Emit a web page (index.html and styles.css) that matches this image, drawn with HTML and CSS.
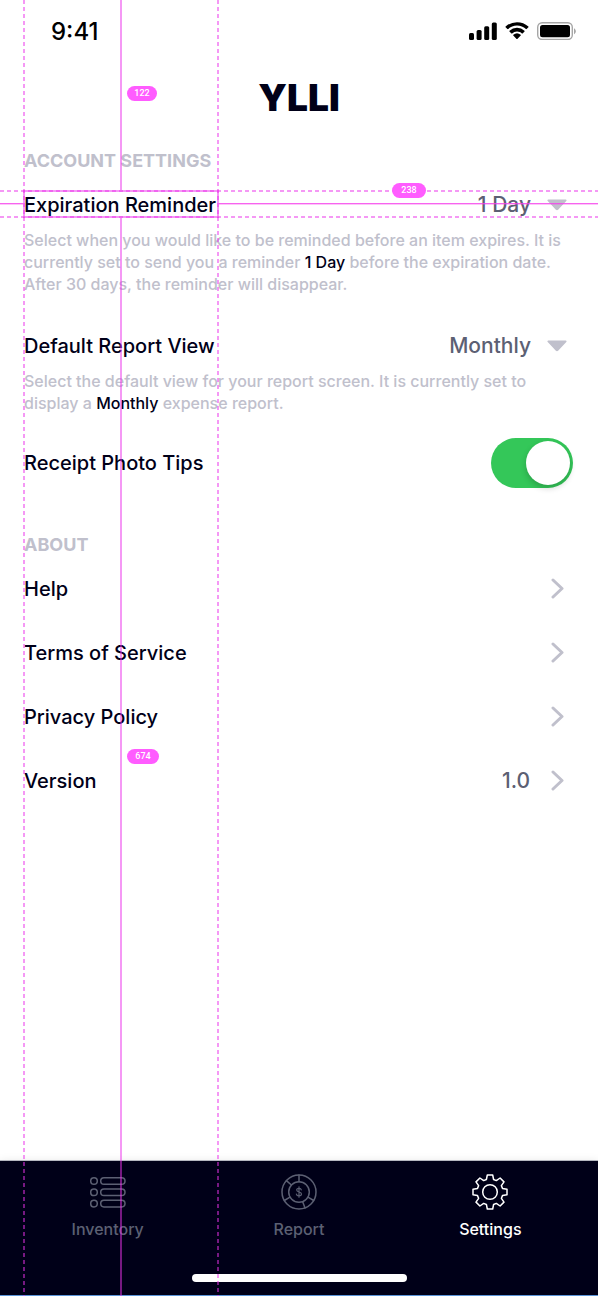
FILE: index.html
```html
<!DOCTYPE html>
<html lang="en">
<head>
<meta charset="utf-8">
<meta name="viewport" content="width=device-width, initial-scale=1">
<title>YLLI Settings</title>
<link rel="stylesheet" href="styles.css">
</head>
<body>
<div class="screen">
  <div class="status-bar">
    <span class="time">9:41</span>
    <div class="status-icons">
      <svg width="28" height="18" viewBox="0 0 28 18" aria-hidden="true"><rect x="0" y="11" width="5" height="7" rx="1.5"/><rect x="7.6" y="8" width="5" height="10" rx="1.5"/><rect x="15.2" y="4.3" width="5" height="13.7" rx="1.5"/><rect x="22.8" y="0.5" width="5" height="17.5" rx="1.5"/></svg>
      <svg width="24" height="18" viewBox="0 0 24 18" aria-hidden="true"><path d="M12 3.6c3.4 0 6.5 1.3 8.9 3.5.2.2.5.2.7 0l1.8-1.8c.2-.2.2-.5 0-.7A16.8 16.8 0 0 0 .6 4.600c-.2.2-.2.5 0 .7l1.800 1.800c.2.2.5.2.7 0C5.500 4.900 8.600 3.600 12 3.600zM12 9.500c1.900 0 3.600.7 4.900 1.900.2.2.5.2.7 0l1.900-1.900c.2-.2.2-.5 0-.7a11 11 0 0 0-15 0c-.2.2-.2.5 0 .7l1.900 1.900c.2.2.5.2.7 0A7.300 7.300 0 0 1 12 9.500zM15.700 13.500c.2-.2.2-.5 0-.7a5.700 5.700 0 0 0-7.400 0c-.2.2-.2.5 0 .7l3.300 3.400c.2.2.5.2.7 0z"/></svg>
      <svg width="39" height="18" viewBox="0 0 39 18" aria-hidden="true"><rect x="0.7" y="0.7" width="34.600" height="16.800" rx="4.500" fill="none" stroke="#a6a6a6" stroke-width="1.400"/><rect x="3" y="3" width="30" height="12.200" rx="2.500"/><path d="M37 6.200v6c1-.5 1.800-1.700 1.800-3s-.8-2.500-1.800-3z" fill="#a6a6a6"/></svg>
    </div>
  </div>
  <header class="brand"><h1 class="logo">YLLI</h1></header>

  <main class="content">
    <section class="account">
      <h2 class="heading">ACCOUNT SETTINGS</h2>
      <div class="setting">
        <div class="row">
          <label class="label" for="reminder">Expiration Reminder</label>
          <span class="picker">
            <select class="select" id="reminder"><option>1 Day</option><option>3 Days</option><option>7 Days</option></select>
            <svg class="caret" width="20" height="12" viewBox="0 0 20 12" aria-hidden="true"><path d="M1.300.5h17.400c.8 0 1.200.9.600 1.500l-8.200 8.800c-.6.600-1.600.600-2.200 0L.7 2C.1 1.400.5.500 1.300.500z"/></svg>
          </span>
        </div>
        <p class="note">Select when you would like to be reminded before an item expires. It is currently set to send you a reminder <strong class="value">1 Day</strong> before the expiration date. After 30 days, the reminder will disappear.</p>
      </div>
      <div class="setting">
        <div class="row">
          <label class="label" for="view">Default Report View</label>
          <span class="picker">
            <select class="select" id="view"><option>Monthly</option><option>Weekly</option></select>
            <svg class="caret" width="20" height="12" viewBox="0 0 20 12" aria-hidden="true"><path d="M1.300.5h17.400c.8 0 1.200.9.600 1.500l-8.200 8.800c-.6.600-1.600.600-2.200 0L.7 2C.1 1.400.5.500 1.300.500z"/></svg>
          </span>
        </div>
        <p class="note">Select the default view for your report screen. It is currently set to display a <strong class="value">Monthly</strong> expense report.</p>
      </div>
      <div class="row">
        <label class="label" for="tips">Receipt Photo Tips</label>
        <input class="switch" id="tips" type="checkbox" role="switch" checked>
      </div>
    </section>

    <section class="about">
      <h2 class="heading">ABOUT</h2>
      <a class="link" href="#help"><span>Help</span><svg class="chevron" width="14" height="22" viewBox="0 0 14 22" aria-hidden="true"><path d="M3 2 12 10.500 3 19"/></svg></a>
      <a class="link" href="#terms"><span>Terms of Service</span><svg class="chevron" width="14" height="22" viewBox="0 0 14 22" aria-hidden="true"><path d="M3 2 12 10.500 3 19"/></svg></a>
      <a class="link" href="#privacy"><span>Privacy Policy</span><svg class="chevron" width="14" height="22" viewBox="0 0 14 22" aria-hidden="true"><path d="M3 2 12 10.500 3 19"/></svg></a>
      <a class="link" href="#version"><span>Version</span><span class="version">1.0</span><svg class="chevron" width="14" height="22" viewBox="0 0 14 22" aria-hidden="true"><path d="M3 2 12 10.500 3 19"/></svg></a>
    </section>
  </main>

  <footer class="dock">
    <nav class="tabs">
      <a class="tab" href="#inventory">
        <svg width="36" height="36" viewBox="0 0 36 36" aria-hidden="true"><circle cx="4" cy="7" r="3.300"/><rect x="10.700" y="3.700" width="24.300" height="6.600" rx="3.300"/><circle cx="4" cy="18.300" r="3.300"/><rect x="10.700" y="15" width="24.300" height="6.600" rx="3.300"/><circle cx="4" cy="29.600" r="3.300"/><rect x="10.700" y="26.300" width="24.300" height="6.600" rx="3.300"/></svg>
        <span>Inventory</span>
      </a>
      <a class="tab" href="#report">
        <svg width="36" height="36" viewBox="0 0 36 36" aria-hidden="true"><circle cx="18" cy="18" r="17"/><circle cx="18" cy="18" r="10.300"/><path d="M18 1v6.700M5.400 6.600l5 4.400M3.300 26.500l5.700-3.300M24 33.900l-2.300-6.200M32.700 26.500 27 23.200"/><path stroke-width="1.200" d="M20.300 15.800c-.2-1-1-1.500-2.300-1.500s-2.300.6-2.300 1.700c0 2.600 4.800 1.400 4.800 4 0 1.200-1 1.800-2.500 1.800s-2.400-.6-2.600-1.700M18 12.800v10.400"/></svg>
        <span>Report</span>
      </a>
      <a class="tab active" href="#settings" aria-current="page">
        <svg width="36" height="36" viewBox="0 0 36 36" aria-hidden="true"><circle cx="18" cy="18" r="7.300"/><path d="M15.300 1h5.400l.9 4.500 2.700 1.100L28.100 4 32 7.900l-2.600 3.800 1.100 2.700 4.500.9v5.400l-4.500.9-1.100 2.700 2.600 3.800-3.900 3.900-3.800-2.600-2.700 1.100-.9 4.500h-5.400l-.9-4.500-2.700-1.100L7.900 32 4 28.100l2.600-3.800-1.100-2.700-4.500-.9v-5.400l4.500-.9 1.100-2.700L4 7.900 7.900 4l3.800 2.600 2.700-1.100z"/></svg>
        <span>Settings</span>
      </a>
    </nav>
    <div class="home-indicator"></div>
  </footer>

  <div class="guides">
    <i class="dash-v left"></i><i class="dash-v right"></i>
    <i class="dash-h top"></i><i class="dash-h bottom"></i>
    <i class="solid-v above"></i><i class="solid-v below"></i>
    <i class="solid-h before"></i><i class="solid-h after"></i>
    <i class="selection"></i>
    <span class="badge gap-top">122</span>
    <span class="badge gap-right">238</span>
    <span class="badge gap-bottom">674</span>
  </div>
</div>
</body>
</html>
```
FILE: styles.css
```css
* { box-sizing: border-box; }
body { margin: 0; background: #fff; color: #000018; font-family: Inter, sans-serif; }
h1, h2, p { margin: 0; }
a { color: inherit; text-decoration: none; }
svg { display: block; flex: none; }

.screen { position: relative; display: flex; flex-direction: column; min-height: 100vh; overflow: hidden; }
.status-bar { display: flex; align-items: center; justify-content: space-between; height: 62px; padding: 0 22px 0 51px; }
.time { color: #000; font-size: 24px; font-weight: 500; }
.status-icons { display: flex; align-items: center; gap: 8px; }
.brand { display: flex; align-items: center; justify-content: center; height: 72px; }
.logo { font-size: 37px; line-height: 40px; font-weight: 900; }

.content { flex: 1; padding: 15px 25px 0 24px; }
.heading { color: #c0c0cc; font-size: 18px; line-height: 24px; font-weight: 700; }
.account .heading { margin-bottom: 12px; }
.setting { margin-bottom: 31px; }
.setting + .row { margin-top: -7px; }
.row { display: flex; align-items: center; justify-content: space-between; min-height: 40px; }
.label, .link { font-size: 20px; line-height: 26px; font-weight: 500; }
.picker { display: grid; align-items: center; }
.picker > * { grid-area: 1 / 1; }
.select { width: 160px; height: 40px; padding: 0 42px 0 0; border: 0; appearance: none; background: none; color: #5c6073; font: 500 21px/26px Inter, sans-serif; text-align-last: right; }
.caret { justify-self: end; margin-right: 6px; fill: #c0c0cc; pointer-events: none; }
.note { margin-top: 4px; color: #c0c0cc; font-size: 16px; line-height: 22px; font-weight: 500; }
.value { color: #000018; font-weight: 500; }
.switch { position: relative; width: 82px; height: 50px; margin: 0; border-radius: 25px; appearance: none; background: #dcdce2; }
.switch::before { content: ""; position: absolute; top: 3px; left: 3px; width: 44px; height: 44px; border-radius: 50%; background: #fff; box-shadow: 0 3px 6px rgba(0, 0, 0, .2); }
.switch:checked { background: #34c759; }
.switch:checked::before { left: 35px; }
.about { margin-top: 45px; }
.link { display: flex; align-items: center; justify-content: space-between; height: 64px; padding-right: 9px; }
.version { margin: 0 20px 0 auto; color: #5c6073; font-size: 21px; }
.chevron { fill: none; stroke: #c0c0cc; stroke-width: 3; stroke-linecap: round; stroke-linejoin: round; }

.dock { display: flex; flex-direction: column; height: 136px; padding: 13px 12px; border-top: 1px solid #b5b8c0; border-bottom: 1px solid #5a94d8; background: #000018; box-shadow: 0 0 8px rgba(0, 0, 0, .08); }
.tabs { display: grid; grid-template-columns: repeat(3, 1fr); }
.tab { display: flex; flex-direction: column; align-items: center; gap: 9px; color: #5c6073; font-size: 16px; line-height: 20px; font-weight: 500; }
.tab svg { fill: none; stroke: currentColor; stroke-width: 1.5; stroke-linejoin: round; stroke-linecap: round; }
.tab.active { color: #fff; }
.home-indicator { width: 215px; height: 8px; margin: auto auto 0; border-radius: 4px; background: #fff; }

.guides { position: absolute; inset: 0; pointer-events: none; }
.guides > * { position: absolute; }
.dash-v { top: 0; bottom: 0; width: 2px; background: repeating-linear-gradient(to bottom, rgba(235, 50, 235, .5) 0 4px, transparent 4px 7px); }
.left { left: 23px; }
.right { left: 217px; }
.dash-h { left: 0; right: 0; height: 2px; background: repeating-linear-gradient(to right, rgba(235, 50, 235, .5) 0 4px, transparent 4px 7px); }
.top { top: 190px; }
.bottom { top: 216px; }
.solid-v { left: 120px; width: 2px; background: rgba(235, 50, 235, .5); }
.above { top: 0; height: 190px; }
.below { top: 218px; bottom: 0; }
.solid-h { top: 203px; height: 2px; background: linear-gradient(rgba(245, 60, 235, .8) 1px, rgba(245, 60, 235, .3) 1px); }
.before { left: 0; width: 23px; }
.after { left: 219px; right: 0; }
.selection { top: 190px; left: 23px; width: 196px; height: 28px; border: 2px solid rgba(235, 50, 235, .5); }
.badge { height: 15px; border-radius: 8px; background: #ff5cff; color: #fff; font: 500 9px/15px Roboto, sans-serif; text-align: center; }
.gap-top { top: 86px; left: 127px; width: 30px; }
.gap-right { top: 183px; left: 392px; width: 34px; }
.gap-bottom { top: 749px; left: 127px; width: 32px; }
```
